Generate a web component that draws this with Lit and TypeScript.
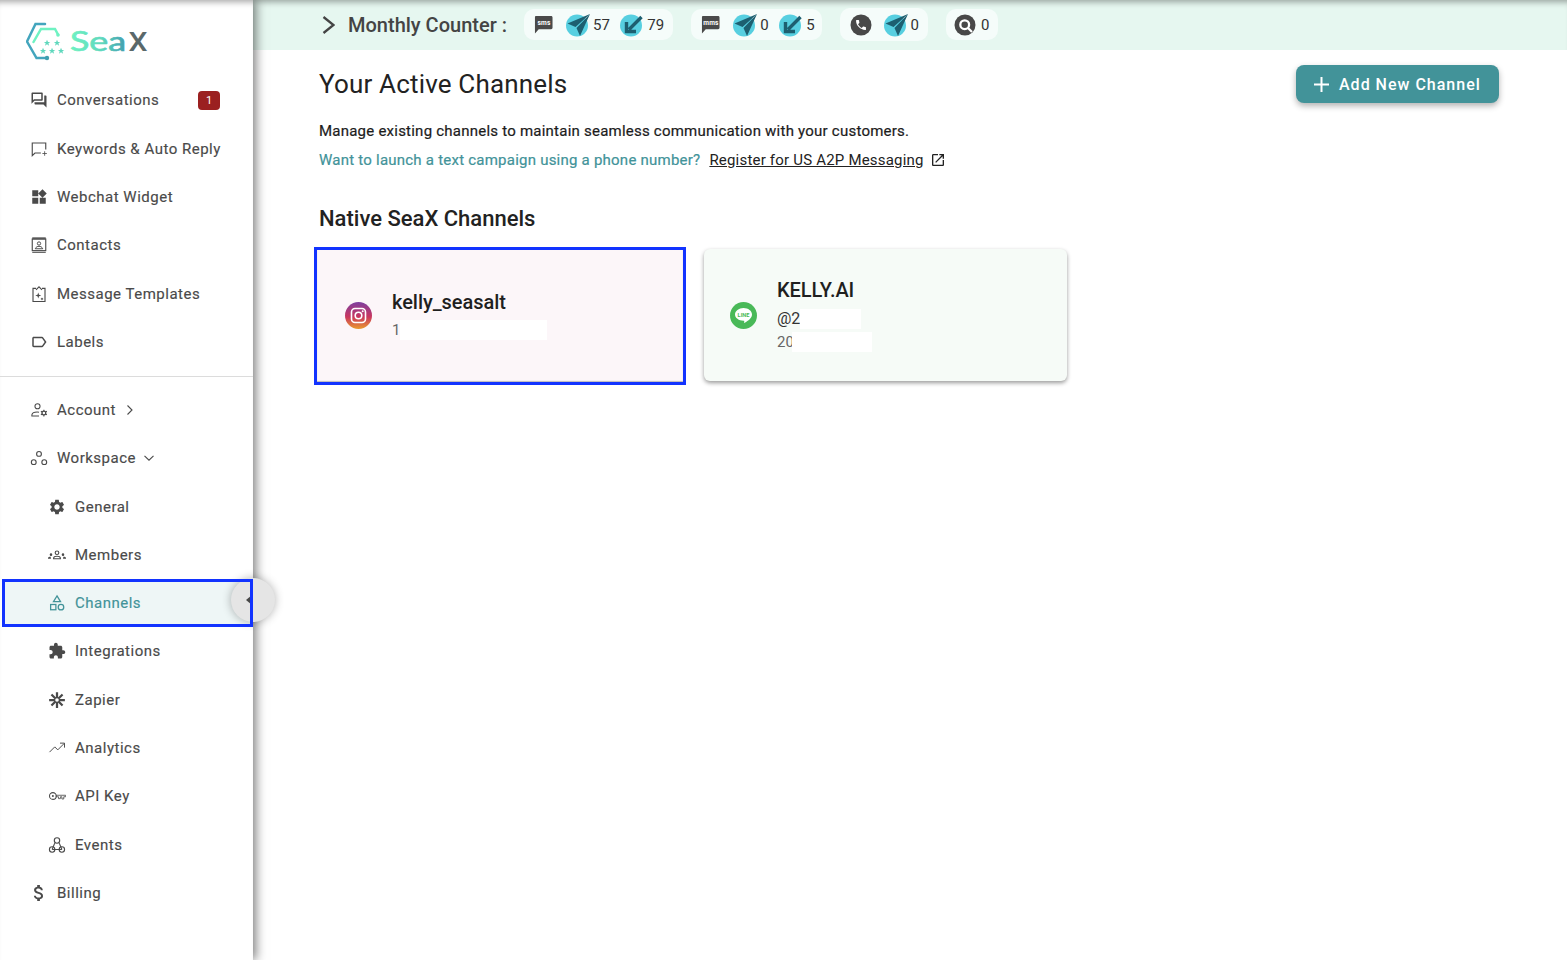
import { LitElement, html, css, svg } from "lit";
import { customElement } from "lit/decorators.js";

const fill = (d: string) => svg`<path d=${d} fill="currentColor"/>`;

const icons: Record<string, unknown> = {
  forum: fill("M15 4v7H5.17L4 12.17V4h11m1-2H3c-.55 0-1 .45-1 1v14l4-4h10c.55 0 1-.45 1-1V3c0-.55-.45-1-1-1zm5 4h-2v9H6v2c0 .55.45 1 1 1h11l4 4V7c0-.55-.45-1-1-1z"),
  keywords: svg`<path d="M21 12.500V4H3v17l3.600-3.600H14.500" fill="none" stroke="currentColor" stroke-width="1.500"/><path d="M19.500 15v6M16.500 18h6" stroke="currentColor" stroke-width="1.100"/>`,
  widgets: fill("M13 13v8h8v-8h-8zM3 21h8v-8H3v8zM3 3v8h8V3H3zm13.66-1.31L11 7.34 16.66 13l5.66-5.66-5.66-5.65z"),
  contacts: svg`<path d="M3 1.500h18v3H3zM3 21h18v1.800H3z" fill="#6a6a6a"/><rect x="3" y="4" width="18" height="15.500" fill="none" stroke="currentColor" stroke-width="1.500"/><circle cx="12" cy="10" r="2.200" fill="none" stroke="currentColor" stroke-width="1.300"/><path d="M7 17c1-2.600 3-3.200 5-3.200s4 .6 5 3.200z" fill="none" stroke="currentColor" stroke-width="1.300"/>`,
  template: svg`<path d="M8 4.500H4v17.500h16V4.500h-4" fill="none" stroke="currentColor" stroke-width="1.500"/><path d="M8 6.500l4-4 4 4" fill="none" stroke="currentColor" stroke-width="1.500"/><path d="M11 10l1 2.900L15 14l-3 1.100L11 18l-1-2.900L7 14l3-1.100zM16 16.500l.7 1.300 1.300.7-1.300.7-.7 1.300-.7-1.300-1.300-.7 1.300-.7z" fill="currentColor"/>`,
  label: fill("M17.63 5.84C17.27 5.33 16.67 5 16 5L5 5.01C3.9 5.01 3 5.9 3 7v10c0 1.1.9 1.99 2 1.99L16 19c.67 0 1.27-.33 1.63-.84L22 12l-4.37-6.16zM16 17H5V7h11l3.55 5L16 17z"),
  account: svg`<circle cx="10" cy="7" r="3.400" fill="none" stroke="currentColor" stroke-width="1.400"/><path d="M12 15c-1-.3-1.700-.4-2.500-.4-3.500 0-6.500 1.600-7 3.800v1.600h9.500" fill="none" stroke="currentColor" stroke-width="1.400"/><circle cx="18.500" cy="16" r="2.500" fill="none" stroke="currentColor" stroke-width="1.700"/><path d="M18.500 11.500v2M18.500 18.500v2M14.500 13.700l1.800 1M20.700 17.300l1.800 1M14.500 18.300l1.800-1M20.700 14.700l1.800-1" stroke="currentColor" stroke-width="1.400"/>`,
  workspace: svg`<g fill="none" stroke="currentColor" stroke-width="1.500"><circle cx="12" cy="6.500" r="3.200"/><circle cx="5" cy="17.500" r="3.200"/><circle cx="19" cy="17.500" r="3.200"/></g>`,
  settings: fill("M19.14 12.94c.04-.3.06-.61.06-.94 0-.32-.02-.64-.07-.94l2.03-1.58c.18-.14.23-.41.12-.61l-1.92-3.32c-.12-.22-.37-.29-.59-.22l-2.39.96c-.5-.38-1.03-.7-1.62-.94l-.36-2.54c-.04-.24-.24-.41-.48-.41h-3.84c-.24 0-.43.17-.47.41l-.36 2.54c-.59.24-1.13.57-1.62.94l-2.39-.96c-.22-.08-.47 0-.59.22L2.74 8.87c-.12.21-.08.47.12.61l2.03 1.58c-.05.3-.09.63-.09.94s.02.64.07.94l-2.03 1.58c-.18.14-.23.41-.12.61l1.92 3.32c.12.22.37.29.59.22l2.39-.96c.5.38 1.03.7 1.62.94l.36 2.54c.05.24.24.41.48.41h3.84c.24 0 .44-.17.47-.41l.36-2.54c.59-.24 1.13-.56 1.62-.94l2.39.96c.22.08.47 0 .59-.22l1.92-3.32c.12-.22.07-.47-.12-.61l-2.01-1.58zM12 15.6c-1.98 0-3.6-1.62-3.6-3.6s1.62-3.6 3.6-3.6 3.6 1.62 3.6 3.6-1.62 3.6-3.6 3.6z"),
  members: svg`<circle cx="12" cy="9" r="2.400" fill="none" stroke="currentColor" stroke-width="1.500"/><path d="M7.500 17v-1c.2-1.500 2.200-2.300 4.500-2.300s4.300.8 4.500 2.300v1z" fill="none" stroke="currentColor" stroke-width="1.500"/><circle cx="4" cy="11.500" r="1.700" fill="currentColor"/><circle cx="20" cy="11.500" r="1.700" fill="currentColor"/><path d="M0 17v-1.200c.3-1 1.500-1.500 3.500-1.500l.5 2.700zM24 17v-1.200c-.3-1-1.500-1.500-3.500-1.500l-.5 2.700z" fill="currentColor"/>`,
  category: svg`<g fill="none" stroke="currentColor" stroke-width="1.700"><path d="M12 2.500l4.700 7.700H7.300z"/><rect x="3.500" y="14" width="7" height="7"/><circle cx="17.300" cy="17.500" r="3.700"/></g>`,
  extension: fill("M20.5 11H19V7c0-1.100-.9-2-2-2h-4V3.500C13 2.120 11.880 1 10.500 1S8 2.120 8 3.500V5H4c-1.100 0-1.990.9-1.990 2v3.800H3.500c1.490 0 2.700 1.210 2.700 2.700s-1.210 2.700-2.700 2.700H2V20c0 1.100.9 2 2 2h3.800v-1.500c0-1.490 1.210-2.700 2.700-2.700 1.490 0 2.700 1.210 2.700 2.700V22H17c1.100 0 2-.9 2-2v-4h1.500c1.380 0 2.500-1.120 2.500-2.500S21.880 11 20.500 11z"),
  zapier: svg`<g stroke="currentColor" stroke-width="3"><path d="M12 1.500v21M1.500 12h21M4.600 4.600l14.800 14.800M4.600 19.400L19.400 4.600"/></g><circle cx="12" cy="12" r="2.400" fill="#fff"/>`,
  trending: svg`<path d="M2 17.500l7-7 4 4 8.500-8.500M16 5.500h6v6" fill="none" stroke="currentColor" stroke-width="1.300"/>`,
  key: svg`<circle cx="6.500" cy="12" r="4.500" fill="none" stroke="currentColor" stroke-width="1.400"/><circle cx="6.500" cy="12" r="1.300" fill="currentColor"/><path d="M11 11h12.500v2H21v3h-2.500v-3h-2v2.500H14V13h-3z" fill="none" stroke="currentColor" stroke-width="1.100"/>`,
  webhook: svg`<g fill="none" stroke="currentColor" stroke-width="1.500"><circle cx="12" cy="6" r="3.600"/><circle cx="5.500" cy="18" r="3.600"/><circle cx="18.500" cy="18" r="3.600"/><path d="M9 9.500l-3.500 8.500M15 9.500l3.500 8.500M5.500 18h13"/></g>`,
  money: svg`<g transform="translate(12 12) scale(1.200) translate(-12 -12)"><path d="M11.800 10.900c-2.270-.59-3-1.200-3-2.150 0-1.090 1.010-1.850 2.700-1.850 1.780 0 2.440.85 2.500 2.100h2.210c-.07-1.720-1.120-3.300-3.210-3.810V3h-3v2.160c-1.940.42-3.500 1.680-3.500 3.610 0 2.310 1.910 3.460 4.700 4.130 2.500.6 3 1.480 3 2.410 0 .69-.49 1.790-2.700 1.790-2.060 0-2.870-.92-2.980-2.100h-2.200c.12 2.190 1.760 3.420 3.680 3.830V21h3v-2.150c1.950-.37 3.500-1.500 3.500-3.550 0-2.840-2.430-3.810-4.700-4.400z" fill="currentColor"/></g>`,
};

const icon = (name: string) => html`<svg class="nav-icon" viewBox="0 0 24 24">${icons[name]}</svg>`;

const chevRight = html`<svg class="caret" viewBox="0 0 12 12"><path d="M3.500 1.500L8 6l-4.500 4.500" fill="none" stroke="currentColor" stroke-width="1.100"/></svg>`;
const chevDown = html`<svg class="caret" viewBox="0 0 12 12"><path d="M1.500 3.800L6 8.200l4.500-4.400" fill="none" stroke="currentColor" stroke-width="1.100"/></svg>`;

const sent = html`<svg class="ci" viewBox="0 0 26 24"><circle cx="11" cy="12.500" r="11" fill="#57cfe0"/><path d="M24 1L1.500 10.500l8 3.500zM24 1L10.500 15l3.500 8z" fill="#1d5f70"/></svg>`;
const recv = html`<svg class="ci" viewBox="0 0 26 24"><circle cx="11" cy="12.500" r="11" fill="#57cfe0"/><path d="M21.500 4L9 16.500M6.500 9V18.500H16" fill="none" stroke="#1d5f70" stroke-width="3.400"/></svg>`;
const bubble = (label: string) => html`<svg class="bub" viewBox="0 0 20 20"><path d="M2 1h16c.9 0 1.500.6 1.500 1.500v11c0 .9-.6 1.500-1.500 1.500H5l-4 4.500V2.500C1 1.600 1.300 1 2 1z" fill="#4a4a4a"/><text x="10.500" y="10.500" text-anchor="middle" class="bubt">${label}</text></svg>`;
const phone = html`<svg class="dark" viewBox="0 0 22 22"><circle cx="11" cy="11" r="10.500" fill="#484848"/><path transform="translate(4.400 4.400) scale(.55)" d="M6.620 10.790c1.440 2.830 3.760 5.140 6.590 6.590l2.200-2.200c.27-.27.67-.36 1.020-.24 1.120.37 2.330.57 3.570.57.55 0 1 .45 1 1V20c0 .55-.45 1-1 1-9.390 0-17-7.610-17-17 0-.55.45-1 1-1h3.500c.55 0 1 .45 1 1 0 1.250.2 2.450.57 3.570.11.35.03.74-.25 1.020l-2.200 2.200z" fill="#fff"/></svg>`;
const lookup = html`<svg class="dark near" viewBox="0 0 22 22"><circle cx="11" cy="11" r="10.500" fill="#484848"/><circle cx="10.700" cy="10.700" r="4.400" fill="none" stroke="#fff" stroke-width="2.300"/><path d="M14 14l4 4" stroke="#fff" stroke-width="2.300"/></svg>`;

const STAR = "M0-3l.9 2h2.100l-1.700 1.300.6 2.100L0 1.100-1.800 2.400l.6-2.100-1.700-1.300h2.100z";
const stars = [[21, 23], [31, 23], [17, 31], [26, 31], [35, 31]];

const mainNav = [
  { icon: "forum", label: "Conversations", badge: "1" },
  { icon: "keywords", label: "Keywords & Auto Reply" },
  { icon: "widgets", label: "Webchat Widget" },
  { icon: "contacts", label: "Contacts" },
  { icon: "template", label: "Message Templates" },
  { icon: "label", label: "Labels" },
];
const subNav = [
  { icon: "settings", label: "General" },
  { icon: "members", label: "Members" },
  { icon: "category", label: "Channels", active: true },
  { icon: "extension", label: "Integrations" },
  { icon: "zapier", label: "Zapier" },
  { icon: "trending", label: "Analytics" },
  { icon: "key", label: "API Key" },
  { icon: "webhook", label: "Events" },
];

@customElement("app-root")
export class AppRoot extends LitElement {
  static styles = css`
    :host { display: flex; height: 100vh; overflow: hidden; background: #fff; font-family: Roboto, "Liberation Sans", sans-serif; color: #1f1f1f; }
    * { box-sizing: border-box; }
    .side { position: relative; z-index: 2; flex: 0 0 253px; background: #fff; box-shadow: 3px 0 10px rgba(0,0,0,.5), inset 0 7px 6px -5px rgba(0,0,0,.35); }
    .logo { height: 76.3px; padding: 20px 0 0 26px; }
    .logo svg { display: block; width: 125px; height: 44px; }
    .row { display: flex; align-items: center; height: 48.3px; padding-left: 30px; gap: 9px; font-size: 15px; font-weight: 400; letter-spacing: .5px; color: #4a4a4a; -webkit-text-stroke: .15px #4a4a4a; position: relative; }
    .row.sub { padding-left: 48px; }
    .row.active { margin-left: 2px; padding-left: 46px; background: #eef6f6; color: #429399; -webkit-text-stroke: .15px #429399; }
    .row.active::after { content: ""; position: absolute; inset: 0; border: 3px solid #1233ff; z-index: 3; }
    .nav-icon { width: 18px; height: 18px; flex: none; }
    .caret { width: 12px; height: 12px; margin-left: -1.500px; }
    .badge { margin-left: auto; margin-right: 33px; width: 22px; height: 19px; background: #9b2020; border-radius: 4px; color: #fff; -webkit-text-stroke: 0; font-size: 11px; letter-spacing: 0; display: flex; align-items: center; justify-content: center; }
    hr { border: 0; border-top: 1px solid #dcdcdc; margin: 10px 0 8.750px; }
    .collapse { position: absolute; left: 231px; top: 578px; width: 44px; height: 44px; border-radius: 50%; background: #e5e5e5; box-shadow: 0 0 10px rgba(0,0,0,.3); z-index: 2; display: flex; align-items: center; justify-content: flex-start; padding-left: 15px; }
    .collapse i { width: 0; height: 0; border: 5px solid transparent; border-left-width: 0; border-right: 6px solid #484848; }

    .content { flex: 1; min-width: 0; }
    .top { height: 50px; padding-bottom: 1px; background: #e6f7f0; box-shadow: inset 0 7px 6px -5px rgba(0,0,0,.35); display: flex; align-items: center; padding-left: 68px; }
    .chev { width: 14px; height: 18px; margin-right: 13px; color: #444; }
    .mc { font-size: 20px; font-weight: 500; color: #444; margin-right: 17px; white-space: nowrap; }
    .pill { display: flex; align-items: center; height: 31px; background: #f5fcfa; border-radius: 10px; padding: 0 9px 0 10px; margin-right: 18px; font-size: 15px; color: #333; }
    .pill.tall { height: 33px; }
    .pill.narrow { padding-right: 7px; }
    .pill.lookup { padding-left: 8px; }
    .bub { width: 19px; height: 19px; margin-right: 13px; }
    .bubt { font: 700 7px Roboto, sans-serif; fill: #fff; letter-spacing: .2px; }
    .ci { width: 26px; height: 24px; margin-right: 1px; flex: none; }
    .dark { width: 22px; height: 22px; margin-right: 12px; flex: none; }
    .dark.near { margin-right: 5px; }
    .n { margin-right: 10.500px; }

    .body { padding: 15px 68px 0 66px; }
    .head { display: flex; justify-content: space-between; align-items: center; height: 38px; }
    h1 { margin: 0; font-size: 26px; font-weight: 400; color: #222; letter-spacing: .17px; }
    .btn { display: flex; align-items: center; gap: 9px; width: 203px; height: 38px; padding-left: 17px; background: #429399; color: #fff; border: 0; border-radius: 8px; font: 500 16px Roboto, sans-serif; letter-spacing: 1px; box-shadow: 0 3px 6px rgba(0,0,0,.3); }
    .btn svg { width: 17px; height: 17px; }
    .desc { margin: 18px 0 0; font-size: 15px; line-height: 20px; font-weight: 400; letter-spacing: .23px; -webkit-text-stroke: .2px #1c1c1c; color: #1c1c1c; }
    .links { margin-top: 9px; font-size: 15px; line-height: 20px; display: flex; align-items: center; }
    .links .t { color: #429399; letter-spacing: .23px; -webkit-text-stroke: .2px #429399; margin-right: 9px; }
    .links a { color: #222; text-decoration: underline; letter-spacing: .2px; }
    .links svg { width: 16px; height: 16px; margin-left: 6px; color: #222; }
    h2 { margin: 34px 0 15px; font-size: 22px; line-height: 30px; font-weight: 500; color: #222; }
    .cards { display: grid; grid-template-columns: 366px 363px; column-gap: 21px; margin-left: -2px; align-items: start; }
    .card { height: 132px; border-radius: 6px; display: flex; align-items: center; gap: 20px; }
    .card.ig { margin-top: 1px; background: #fcf6f9; padding: 0 0 2px 28px; outline: 3px solid #1233ff; border-radius: 0; box-shadow: inset 0 -1px 1px rgba(0,0,0,.25); }
    .card.ln { background: #f6fbf7; padding-left: 26px; box-shadow: 0 2px 4px rgba(0,0,0,.4); }
    .brand { width: 27px; height: 27px; flex: none; display: block; }
    .name { font-size: 20px; line-height: 26px; font-weight: 500; color: #1f1f1f; margin-bottom: 4px; letter-spacing: -.05px; }
    .line { display: flex; align-items: center; height: 23px; font-size: 15px; color: #666; }
    .line.dk { color: #333; font-size: 16px; }
    .mask { height: 20px; background: #fff; flex: none; }
    .m147 { width: 147px; } .m61 { width: 61px; } .m80 { width: 80px; margin-left: -2px; }
  `;

  private navRow(n: { icon: string; label: string; badge?: string; active?: boolean }, sub = false) {
    return html`<div class="row ${sub ? "sub" : ""} ${n.active ? "active" : ""}">
      ${icon(n.icon)}<span>${n.label}</span>
      ${n.badge ? html`<span class="badge">${n.badge}</span>` : null}
    </div>`;
  }

  render() {
    return html`
      <aside class="side">
        <div class="logo">
          <svg viewBox="0 0 125 44">
            <defs>
              <linearGradient id="sg" x1="44" x2="102" y1="0" y2="0" gradientUnits="userSpaceOnUse"><stop offset="0" stop-color="#6ff2c2"/><stop offset=".55" stop-color="#5fd8bd"/><stop offset="1" stop-color="#3f98ae"/></linearGradient>
            </defs>
            <path d="M19 4H9.500L1 21.500 10.500 38H20" fill="none" stroke="#43a5bd" stroke-width="2.500" stroke-linecap="round"/>
            <circle cx="21" cy="38" r="2.200" fill="#3f9fb0"/>
            <path d="M7.500 22L15 9h14l3 5.500" fill="none" stroke="#6ff2c2" stroke-width="2.500" stroke-linecap="round"/>
            <circle cx="32" cy="15" r="1.800" fill="#6ff2c2"/>
            <g fill="#5fd8bd">${stars.map(([x, y]) => svg`<path transform="translate(${x} ${y}) scale(1.100)" d=${STAR}/>`)}</g>
            <text x="44" y="31" font-family="Lato, Roboto, sans-serif" font-size="26" font-weight="400" fill="url(#sg)" stroke="url(#sg)" stroke-width=".7" textLength="56" lengthAdjust="spacingAndGlyphs">Sea</text>
            <text x="102.500" y="31" font-family="Roboto, sans-serif" font-size="26" font-weight="500" fill="#5a686a" textLength="19" lengthAdjust="spacingAndGlyphs">X</text>
          </svg>
        </div>
        ${mainNav.map((n) => this.navRow(n))}
        <hr />
        <div class="row">${icon("account")}<span>Account</span>${chevRight}</div>
        <div class="row">${icon("workspace")}<span>Workspace</span>${chevDown}</div>
        ${subNav.map((n) => this.navRow(n, true))}
        <div class="row">${icon("money")}<span>Billing</span></div>
        <div class="collapse"><i></i></div>
      </aside>
      <div class="content">
        <div class="top">
          <svg class="chev" viewBox="0 0 14 18"><path d="M2.500 1L12.500 9l-10 8" fill="none" stroke="currentColor" stroke-width="2.300"/></svg>
          <span class="mc">Monthly Counter :</span>
          <div class="pill">${bubble("sms")}${sent}<span class="n">57</span>${recv}<span>79</span></div>
          <div class="pill narrow">${bubble("mms")}${sent}<span class="n">0</span>${recv}<span>5</span></div>
          <div class="pill tall">${phone}${sent}<span>0</span></div>
          <div class="pill lookup">${lookup}<span>0</span></div>
        </div>
        <div class="body">
          <div class="head">
            <h1>Your Active Channels</h1>
            <button class="btn"><svg viewBox="0 0 17 17"><path d="M8.500 1v15M1 8.500h15" stroke="#fff" stroke-width="2"/></svg>Add New Channel</button>
          </div>
          <p class="desc">Manage existing channels to maintain seamless communication with your customers.</p>
          <div class="links">
            <span class="t">Want to launch a text campaign using a phone number?</span>
            <a>Register for US A2P Messaging</a>
            <svg viewBox="0 0 24 24"><path d="M19 19H5V5h7V3H5c-1.110 0-2 .9-2 2v14c0 1.100.89 2 2 2h14c1.100 0 2-.9 2-2v-7h-2v7zM14 3v2h3.590l-9.830 9.830 1.410 1.410L19 6.410V10h2V3h-7z" fill="currentColor"/></svg>
          </div>
          <h2>Native SeaX Channels</h2>
          <div class="cards">
            <div class="card ig">
              <svg class="brand" viewBox="0 0 27 27">
                <defs><linearGradient id="ig" x1="0" y1="0" x2="0" y2="1"><stop offset="0" stop-color="#7d3fa0"/><stop offset=".55" stop-color="#c9365f"/><stop offset="1" stop-color="#ea9a2c"/></linearGradient></defs>
                <circle cx="13.500" cy="13.500" r="13.500" fill="url(#ig)"/>
                <rect x="6.500" y="6.500" width="14" height="14" rx="3.500" fill="none" stroke="#fff" stroke-width="1.600"/>
                <circle cx="13.500" cy="13.500" r="3.300" fill="none" stroke="#fff" stroke-width="1.600"/>
                <circle cx="17.700" cy="9.300" r="1" fill="#fff"/>
              </svg>
              <div>
                <div class="name">kelly_seasalt</div>
                <div class="line"><span>1</span><span class="mask m147"></span></div>
              </div>
            </div>
            <div class="card ln">
              <svg class="brand" viewBox="0 0 27 27">
                <circle cx="13.500" cy="13.500" r="13.500" fill="#49b958"/>
                <path d="M13.500 6c4.700 0 8.500 2.900 8.500 6.500 0 3.300-3.700 6.300-7.300 8.300-.5.3-.7 0-.6-.5l.2-1.400c-.1-.2-.4-.2-.8-.2-4.700 0-8.500-2.800-8.500-6.200S8.800 6 13.500 6z" fill="#fff"/>
                <text x="13.500" y="14.800" text-anchor="middle" font-family="Roboto, sans-serif" font-size="5.600" font-weight="700" fill="#49b958">LINE</text>
              </svg>
              <div>
                <div class="name">KELLY.AI</div>
                <div class="line dk"><span>@2</span><span class="mask m61"></span></div>
                <div class="line"><span>20</span><span class="mask m80"></span></div>
              </div>
            </div>
          </div>
        </div>
      </div>
    `;
  }
}
